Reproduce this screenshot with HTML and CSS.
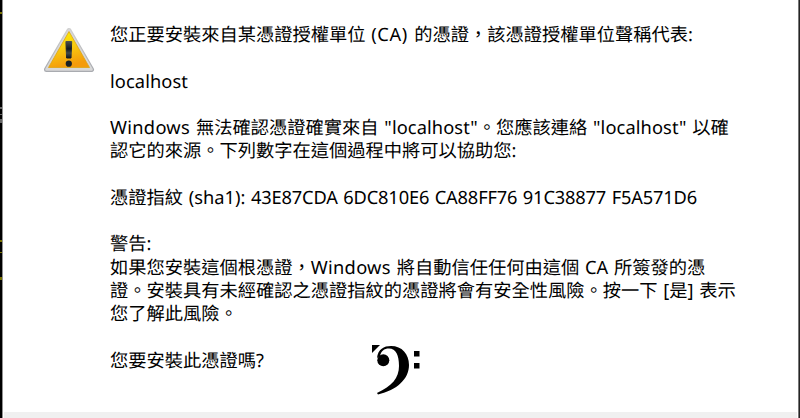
FILE: index.html
```html
<!DOCTYPE html>
<html lang="zh-Hant">
<head>
<meta charset="utf-8">
<title>安全性警告</title>
<link rel="stylesheet" href="styles.css">
</head>
<body>
<div class="screen">
  <div class="edge-left"></div>
  <main class="dialog">
    <section class="content">
      <svg class="warning" viewBox="0 0 54 48" aria-hidden="true">
        <defs>
          <linearGradient id="frame" x1="0" y1="0" x2="0" y2="1"><stop offset="0" stop-color="#cfcfcf"/><stop offset="1" stop-color="#a9abb0"/></linearGradient>
          <linearGradient id="fill" x1="0" y1="0" x2=".3" y2="1"><stop offset="0" stop-color="#fff500"/><stop offset=".5" stop-color="#f9ce10"/><stop offset="1" stop-color="#f49b0b"/></linearGradient>
          <linearGradient id="mark" x1="0" y1="0" x2="0" y2="1"><stop offset="0" stop-color="#4b4e4a"/><stop offset=".45" stop-color="#111922"/><stop offset=".7" stop-color="#414b4b"/><stop offset="1" stop-color="#101820"/></linearGradient>
        </defs>
        <path d="M26 4.5 L48.5 43.5 H3.5 Z" fill="url(#frame)" stroke="url(#frame)" stroke-width="5" stroke-linejoin="round"/>
        <path d="M26 4.5 L48.5 43.5 H3.5 Z" fill="#d8d8d8" stroke="#d8d8d8" stroke-width="2.6" stroke-linejoin="round"/>
        <path d="M26 5.5 L46.5 41.5 H5.5 Z" fill="url(#fill)" stroke="#dda414" stroke-width=".8" stroke-linejoin="round"/>
        <path d="M22.9 15.5 H28.7 L28 32 H23.6 Z" fill="url(#mark)" stroke="url(#mark)" stroke-linejoin="round"/>
        <circle cx="25.8" cy="37.7" r="3.1" fill="#182025"/>
      </svg>
      <div class="message">
        <p>您正要安裝來自某憑證授權單位 <span class="ca">(CA) </span>的憑證，該憑證授權單位聲稱代表:</p>
        <p></p>
        <p><span class="host">localhost</span></p>
        <p></p>
        <p><span class="win">Windows </span>無法確認憑證確實來自 <span class="host">"localhost"</span>。您應該連絡 <span class="host">"localhost"</span> 以確</p>
        <p>認它的來源。下列數字在這個過程中將可以協助您:</p>
        <p></p>
        <p>憑證指紋 <span class="sha">(sha1): </span><span class="hash">43E87CDA 6DC810E6 CA88FF76 91C38877 F5A571D6</span></p>
        <p></p>
        <p>警告:</p>
        <p>如果您安裝這個根憑證，<span class="win">Windows </span>將自動信任任何由這個 CA 所簽發的憑</p>
        <p>證。安裝具有未經確認之憑證指紋的憑證將會有安全性風險。按一下 [是] 表示</p>
        <p>您了解此風險。</p>
        <p></p>
        <p>您要安裝此憑證嗎?</p>
      </div>
      <svg class="clef" viewBox="0 0 52 54" aria-hidden="true">
        <path d="M4 2H12L4 10Z"/>
        <path d="M9 15C10 6 16 3 23 3C34 3 41 11 41 22C41 36 29 47 10 51.5L9 50C24 43 31 35 31 23C31 12 28 5.5 21 5.5C16 5.5 13 8 12 13Z"/>
        <circle cx="15.3" cy="17.2" r="6"/>
        <path d="M46 8H51.5V13.5H46ZM46 20H51.5V25.5H46Z"/>
      </svg>
    </section>
    <footer class="actions"></footer>
  </main>
  <div class="edge-right"></div>
</div>
</body>
</html>
```
FILE: styles.css
```css
* { box-sizing: border-box; }
body { margin: 0; background: #fff; overflow: hidden; }
.screen { display: flex; width: 800px; height: 418px; }
.edge-left {
  width: 3px;
  border-right: 1px solid #929292;
  background:
    linear-gradient(#777100, #777100) 0 12px / 2px 2px no-repeat,
    linear-gradient(#666, #666) 0 107px / 2px 2px no-repeat,
    linear-gradient(#666, #666) 0 114px / 2px 1px no-repeat,
    linear-gradient(#666, #666) 0 119px / 2px 4px no-repeat,
    linear-gradient(#777100, #777100) 0 240px / 2px 2px no-repeat,
    linear-gradient(#777100, #777100) 0 252px / 2px 1px no-repeat,
    linear-gradient(#777100, #777100) 0 277px / 2px 3px no-repeat,
    #000;
}
.edge-right { width: 2px; background: #252525; border-left: 1px solid #777; }
.dialog { display: flex; flex-direction: column; flex: 1; }
.content { position: relative; display: flex; flex: 1; padding: 23px 0 0 40px; }
.warning { width: 54px; height: 48px; margin-top: 3px; }
.message {
  margin-left: 13px;
  font: 18.25px/23.25px "Noto Sans", "Noto Sans CJK TC", sans-serif;
  color: #000;
  word-spacing: 1px;
  text-rendering: geometricPrecision;
}
.message p { height: 23.25px; margin: 0; white-space: pre; }
.ca { letter-spacing: 0.6px; }
.host { letter-spacing: 0.1px; }
.win { letter-spacing: 0.3px; }
.hash { letter-spacing: -0.17px; }
.clef { position: absolute; left: 365px; top: 343px; width: 52px; height: 54px; }
.actions { height: 6px; margin: 0 1px; background: #f0f0f0; }
```
